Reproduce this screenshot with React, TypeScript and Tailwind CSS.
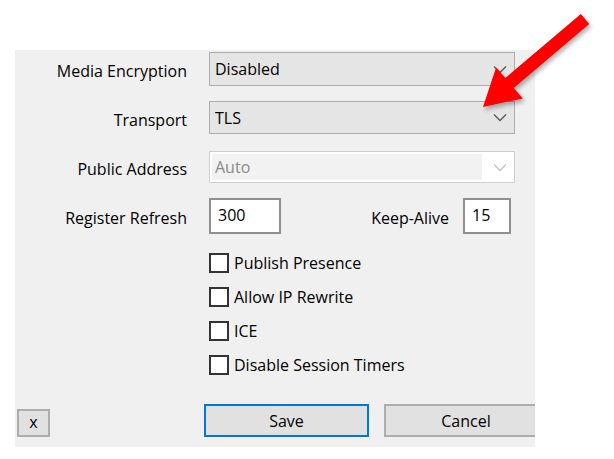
import React from 'react';

const font = { fontFamily: '"Open Sans", "Noto Sans", sans-serif' };

function Chevron({ disabled }: { disabled?: boolean }) {
    return (
        <svg width="14" height="9" viewBox="0 0 14 9" className="shrink-0">
            <path
                d="M1 1.5 L7 7.5 L13 1.5"
                fill="none"
                stroke={disabled ? '#c4c4c4' : '#5a5a5a'}
                strokeWidth="1.4"
            />
        </svg>
    );
}

function Select({ value, h }: { value: string; h: string }) {
    return (
        <div
            className={`flex w-[306px] ${h} items-center border border-[#adadad] bg-[#e5e5e5] pl-[5px] pr-[7px]`}>
            <span className="flex-1 text-black">{value}</span>
            <Chevron />
        </div>
    );
}

function Row({ label, children }: { label: string; children: React.ReactNode }) {
    return (
        <div className="flex items-center">
            <div className="w-[172px] pt-[4px] text-right">{label}</div>
            <div className="ml-[22px]">{children}</div>
        </div>
    );
}

function Check({ label }: { label: string }) {
    return (
        <div className="flex h-[20px] items-center">
            <div className="h-[20px] w-[20px] border-2 border-[#333] bg-white" />
            <span className="ml-[5px]">{label}</span>
        </div>
    );
}

function Arrow() {
    return (
        <svg
            className="pointer-events-none absolute left-0 top-0 drop-shadow-[2px_3px_2px_rgba(0,0,0,0.3)]"
            width="614"
            height="459"
            viewBox="0 0 614 459">
            <polygon
                fill="#ff0000"
                points="580.8,14.1 589.2,23.9 513.7,87.9 522.9,98.4 483,107 496.1,67.6 505.3,78.1"
            />
        </svg>
    );
}

export default function App() {
    return (
        <div
            className="relative h-[459px] w-[614px] overflow-hidden bg-white text-[16px] text-black"
            style={font}>
            <div className="ml-[15px] mt-[50px] flex h-[397px] w-[520px] flex-col overflow-hidden bg-[#f0f0f0] pt-[2px]">
                <Row label="Media Encryption">
                    <Select value="Disabled" h="h-[34px]" />
                </Row>
                <div className="mt-[15px]">
                    <Row label="Transport">
                        <Select value="TLS" h="h-[33px]" />
                    </Row>
                </div>
                <div className="mt-[17px]">
                    <Row label="Public Address">
                        <div className="flex h-[32px] w-[306px] items-center border border-[#cfcfcf] bg-white p-[2px] pr-[7px]">
                            <div className="flex h-full w-[270px] items-center bg-[#f2f2f2] pl-[3px] text-[#8a8a8a]">
                                Auto
                            </div>
                            <div className="flex flex-1 justify-end">
                                <Chevron disabled />
                            </div>
                        </div>
                    </Row>
                </div>
                <div className="mt-[15px]">
                    <Row label="Register Refresh">
                        <div className="flex w-[306px] items-center pr-[4px]">
                            <div className="flex h-[36px] w-[72px] items-center border-2 border-[#8f8f8f] bg-white pl-[7px] pb-[3px]">
                                300
                            </div>
                            <div className="flex-1" />
                            <span className="pt-[4px]">Keep-Alive</span>
                            <div className="ml-[14px] flex h-[36px] w-[48px] items-center border-2 border-[#8f8f8f] bg-white pl-[7px] pb-[3px]">
                                15
                            </div>
                        </div>
                    </Row>
                </div>
                <div className="ml-[194px] mt-[19px] flex flex-col gap-[14px]">
                    <Check label="Publish Presence" />
                    <Check label="Allow IP Rewrite" />
                    <Check label="ICE" />
                    <Check label="Disable Session Timers" />
                </div>
                <div className="mt-[29px] flex items-end">
                    <button className="ml-[2px] flex h-[28px] w-[33px] shrink-0 items-center justify-center border-2 border-[#adadad] bg-[#e1e1e1] pb-[2px]">
                        x
                    </button>
                    <button className="ml-[154px] flex h-[33px] w-[165px] shrink-0 items-center justify-center border-2 border-[#0078d7] bg-[#e1e1e1]">
                        Save
                    </button>
                    <button className="ml-[15px] flex h-[33px] w-[164px] shrink-0 items-center justify-center border-2 border-[#adadad] bg-[#e1e1e1]">
                        Cancel
                    </button>
                </div>
            </div>
            <Arrow />
        </div>
    );
}
